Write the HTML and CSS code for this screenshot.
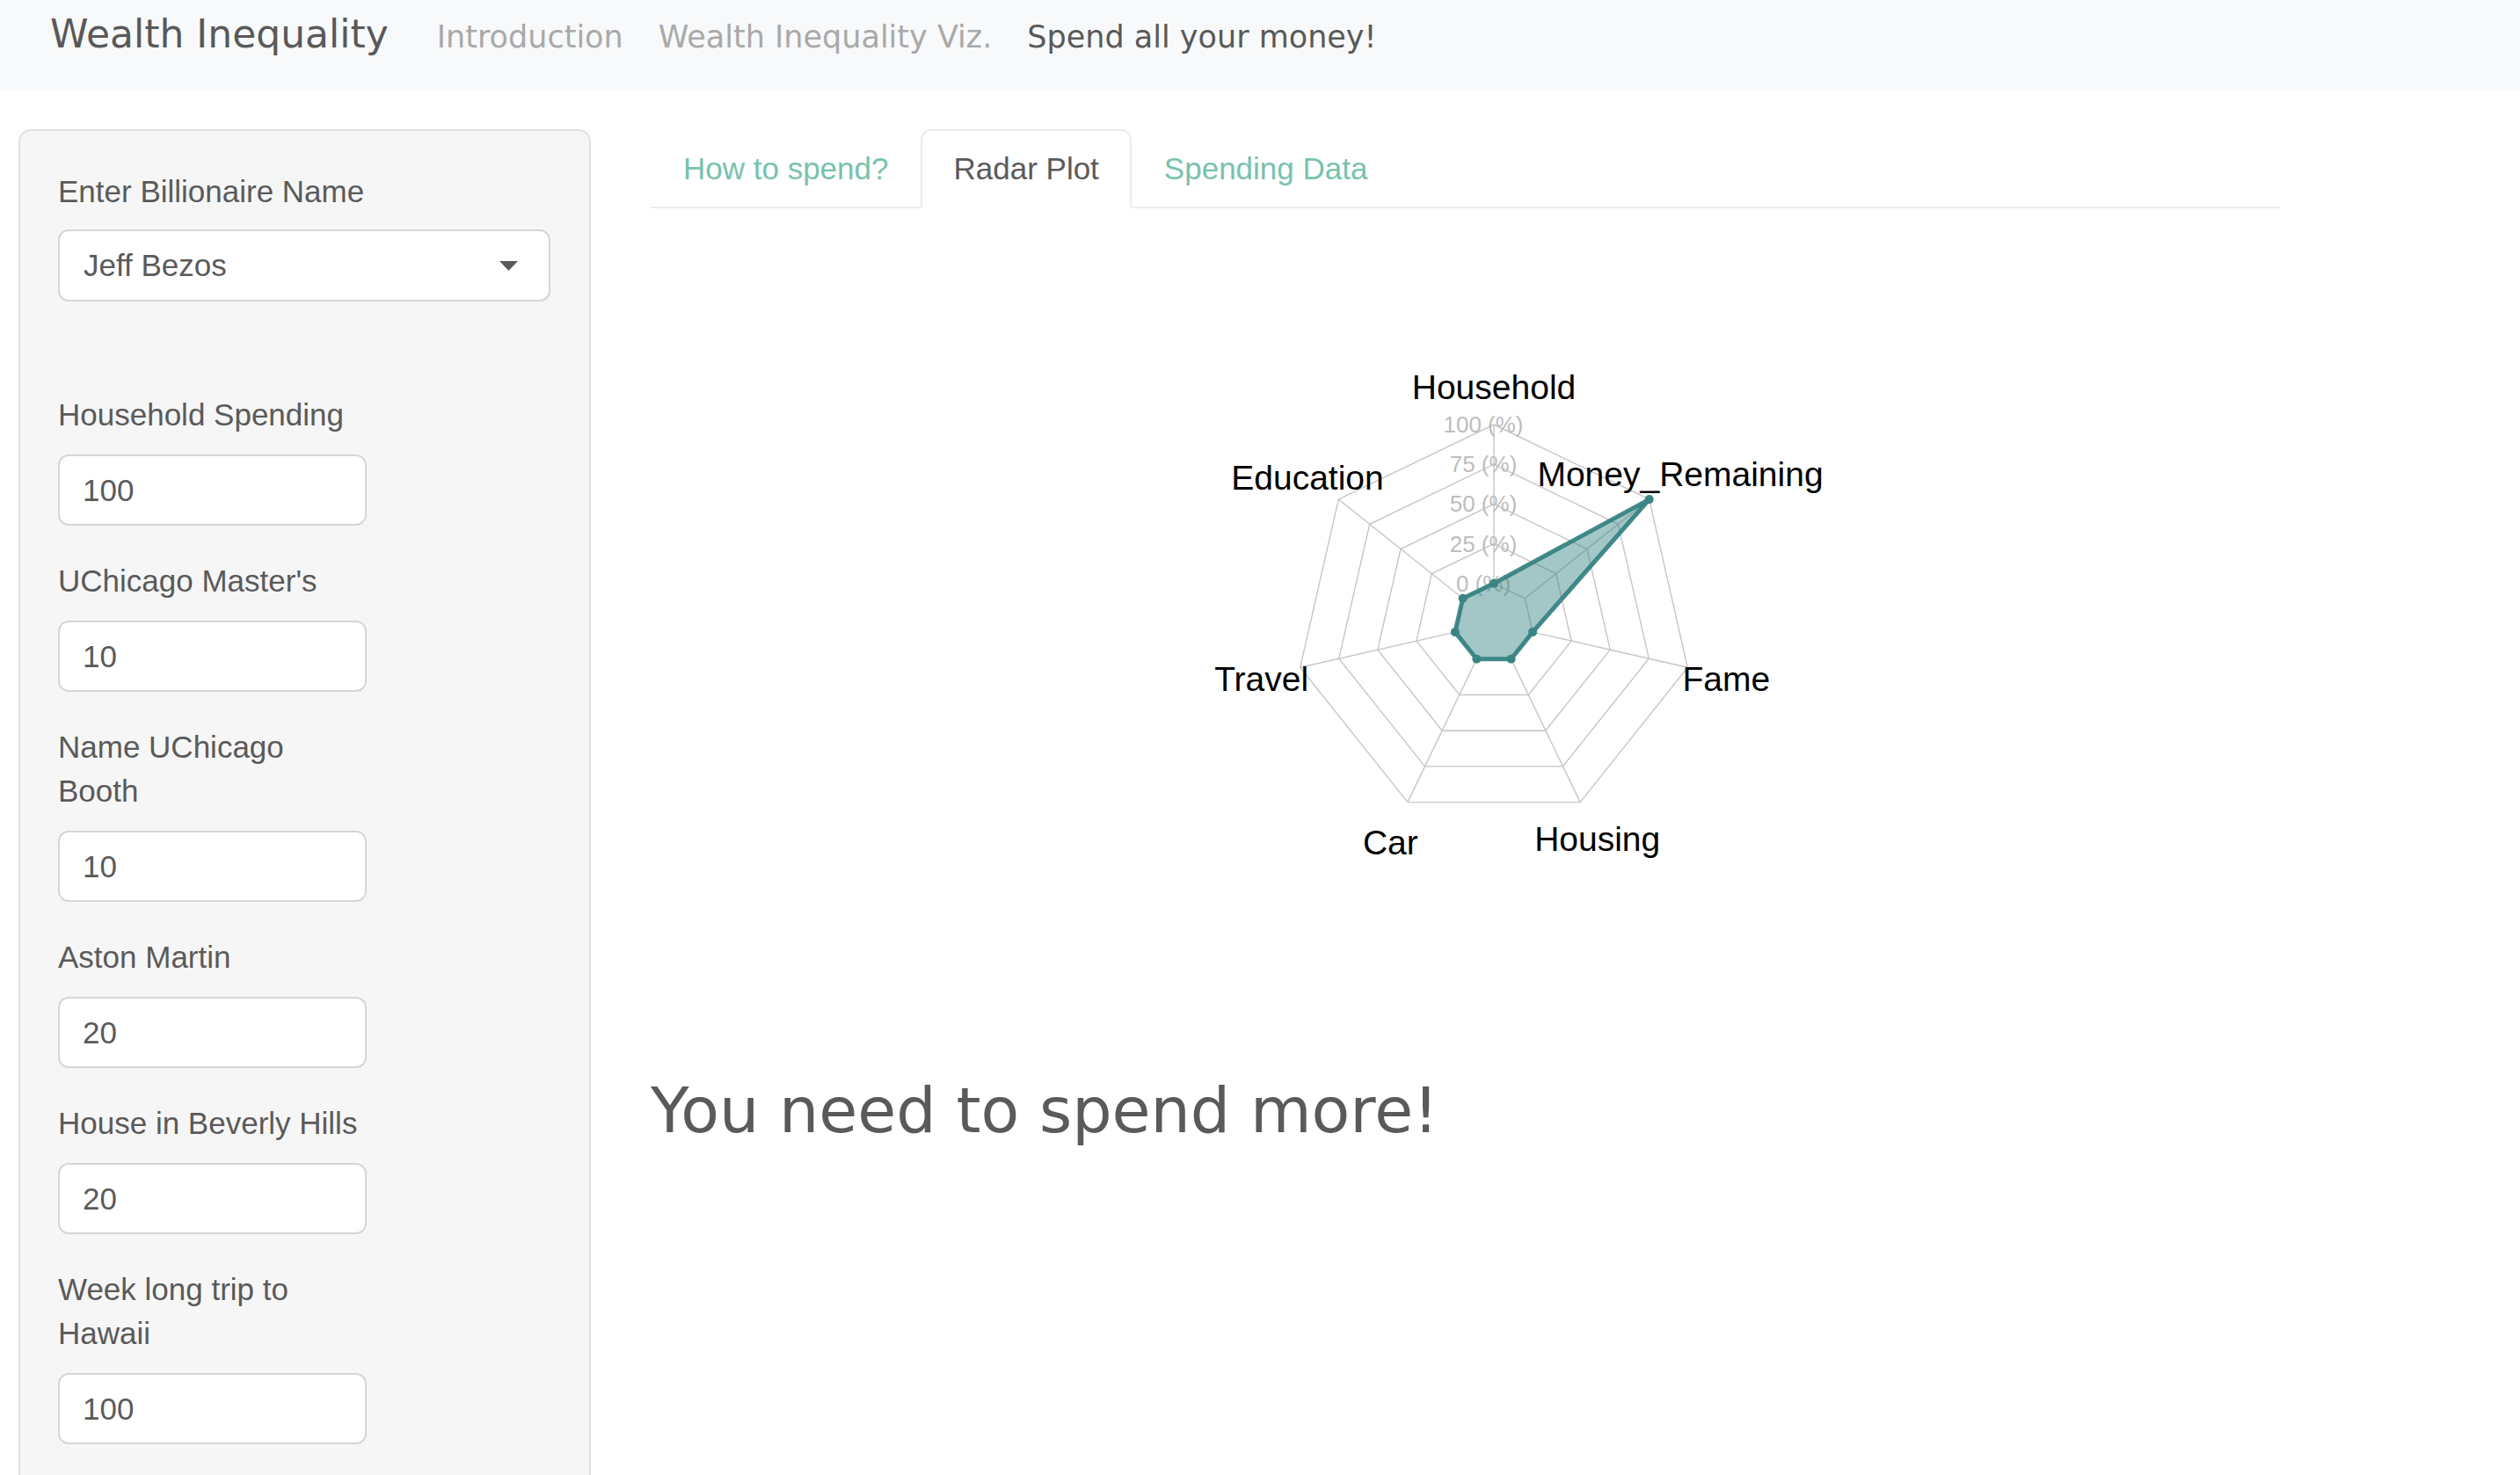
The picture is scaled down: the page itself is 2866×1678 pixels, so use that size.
FILE: index.html
```html
<!DOCTYPE html>
<html lang="en">
<head>
<meta charset="utf-8">
<title>Wealth Inequality</title>
<link rel="stylesheet" href="styles.css">
</head>
<body>
<nav class="navbar">
  <span class="brand">Wealth Inequality</span>
  <ul class="nav">
    <li><a class="nav-link">Introduction</a></li>
    <li><a class="nav-link">Wealth Inequality Viz.</a></li>
    <li><a class="nav-link active">Spend all your money!</a></li>
  </ul>
</nav>
<div class="page">
  <aside class="well">
    <div class="group select-group">
      <label>Enter Billionaire Name</label>
      <div class="select"><span>Jeff Bezos</span><svg class="caret" width="21" height="11" viewBox="0 0 21 11"><polygon points="0,0 21,0 10.5,11" fill="#5a5a5a"/></svg></div>
    </div>
    <div class="group"><label>Household Spending</label><div class="input">100</div></div>
    <div class="group"><label>UChicago Master's</label><div class="input">10</div></div>
    <div class="group"><label>Name UChicago Booth</label><div class="input">10</div></div>
    <div class="group"><label>Aston Martin</label><div class="input">20</div></div>
    <div class="group"><label>House in Beverly Hills</label><div class="input">20</div></div>
    <div class="group"><label>Week long trip to Hawaii</label><div class="input">100</div></div>
  </aside>
  <main class="main">
    <ul class="tabs">
      <li><a class="tab">How to spend?</a></li>
      <li><a class="tab active">Radar Plot</a></li>
      <li><a class="tab">Spending Data</a></li>
    </ul>
    <svg class="radar" width="1854" height="940" viewBox="0 0 1854 940">
      <g transform="translate(959 472)">
        <g class="grid">
          <polygon points="0,-226 176.7,-140.9 220.3,50.3 98.1,203.6 -98.1,203.6 -220.3,50.3 -176.7,-140.9"/>
          <polygon points="0,-180.8 141.3,-112.7 176.3,40.2 78.4,162.9 -78.4,162.9 -176.3,40.2 -141.3,-112.7"/>
          <polygon points="0,-135.6 106,-84.5 132.2,30.2 58.8,122.2 -58.8,122.2 -132.2,30.2 -106,-84.5"/>
          <polygon points="0,-90.4 70.7,-56.4 88.1,20.1 39.2,81.5 -39.2,81.5 -88.1,20.1 -70.7,-56.4"/>
          <polygon points="0,-45.2 35.3,-28.2 44.1,10.1 19.6,40.7 -19.6,40.7 -44.1,10.1 -35.3,-28.2"/>
          <line x1="0" y1="-45.2" x2="0" y2="-226"/>
          <line x1="35.3" y1="-28.2" x2="176.7" y2="-140.9"/>
          <line x1="44.1" y1="10.1" x2="220.3" y2="50.3"/>
          <line x1="19.6" y1="40.7" x2="98.1" y2="203.6"/>
          <line x1="-19.6" y1="40.7" x2="-98.1" y2="203.6"/>
          <line x1="-44.1" y1="10.1" x2="-220.3" y2="50.3"/>
          <line x1="-35.3" y1="-28.2" x2="-176.7" y2="-140.9"/>
        </g>
        <g class="levels">
          <text x="-12" y="-226">100 (%)</text>
          <text x="-12" y="-180.8">75 (%)</text>
          <text x="-12" y="-135.6">50 (%)</text>
          <text x="-12" y="-90.4">25 (%)</text>
          <text x="-12" y="-45.2">0 (%)</text>
        </g>
        <polygon class="data" points="0,-45.2 176.7,-140.9 44.1,10.1 19.6,40.7 -19.6,40.7 -44.1,10.1 -35.3,-28.2"/>
        <g class="pts">
          <circle cx="0" cy="-45.2" r="5"/>
          <circle cx="176.7" cy="-140.9" r="5"/>
          <circle cx="44.1" cy="10.1" r="5"/>
          <circle cx="19.6" cy="40.7" r="5"/>
          <circle cx="-19.6" cy="40.7" r="5"/>
          <circle cx="-44.1" cy="10.1" r="5"/>
          <circle cx="-35.3" cy="-28.2" r="5"/>
        </g>
        <g class="axis-labels">
          <text x="0" y="-269">Household</text>
          <text x="212" y="-170">Money_Remaining</text>
          <text x="264.4" y="63">Fame</text>
          <text x="117.7" y="245">Housing</text>
          <text x="-117.7" y="249">Car</text>
          <text x="-264.4" y="63">Travel</text>
          <text x="-212" y="-166">Education</text>
        </g>
      </g>
    </svg>
    <h2 class="verdict">You need to spend more!</h2>
  </main>
</div>
</body>
</html>
```

FILE: styles.css
```css
html, body {
  margin: 0;
  padding: 0;
  background: #ffffff;
}

body {
  font-family: "Liberation Sans", Arial, sans-serif;
  color: #5a5a5a;
}

.navbar {
  display: flex;
  align-items: baseline;
  height: 102px;
  box-sizing: border-box;
  padding: 9px 0 0 57px;
  background: #f8f9fa;
}

.brand {
  font-family: "DejaVu Sans", sans-serif;
  font-size: 44px;
  line-height: 60px;
  color: #595959;
  margin-right: 35px;
}

.nav {
  display: flex;
  list-style: none;
  margin: 0;
  padding: 0;
}

.nav-link {
  display: block;
  font-family: "DejaVu Sans", sans-serif;
  font-size: 35px;
  line-height: 60px;
  padding: 0 20px;
  color: #a9a9a9;
  text-decoration: none;
}

.nav-link.active {
  color: #595959;
}

.page {
  display: flex;
  align-items: flex-start;
  gap: 68px;
  padding: 45px 0 0 21px;
}

.well {
  flex: none;
  width: 651px;
  box-sizing: border-box;
  border: 2px solid #e2e2e2;
  border-radius: 14px;
  background: #f6f6f6;
  padding: 44px 44px 44px 43px;
}

.group {
  margin-bottom: 38px;
}

.group label {
  display: block;
  max-width: 350px;
  font-size: 35px;
  line-height: 50px;
  margin-bottom: 20px;
  color: #5a5a5a;
}

.select-group {
  margin-bottom: 104px;
}

.select-group label {
  margin-bottom: 18px;
}

.select {
  height: 82px;
  box-sizing: border-box;
  border: 2px solid #d2d7dc;
  border-radius: 12px;
  background: #ffffff;
  display: flex;
  align-items: center;
  justify-content: space-between;
  padding: 0 35px 0 27px;
  font-size: 35px;
  color: #5a5a5a;
}

.caret {
  display: block;
}

.input {
  width: 351px;
  height: 81px;
  box-sizing: border-box;
  border: 2px solid #d2d7dc;
  border-radius: 12px;
  background: #ffffff;
  display: flex;
  align-items: center;
  padding-left: 26px;
  font-size: 35px;
  color: #5a5a5a;
}

.main {
  flex: none;
  width: 1854px;
}

.tabs {
  display: flex;
  list-style: none;
  margin: 0;
  padding: 0;
  border-bottom: 2px solid #ececec;
}

.tabs li {
  margin-bottom: -2px;
}

.tab {
  display: block;
  padding: 18px 35px;
  line-height: 50px;
  border: 2px solid transparent;
  border-radius: 12px 12px 0 0;
  font-size: 35px;
  color: #78c2ad;
  text-decoration: none;
}

.tab.active {
  color: #5a5a5a;
  background: #ffffff;
  border-color: #ececec #ececec #ffffff;
}

.radar {
  display: block;
}

.grid polygon,
.grid line {
  fill: none;
  stroke: #c6c6c6;
  stroke-width: 1.4;
}

.levels text {
  font-family: "Liberation Sans", Arial, sans-serif;
  font-size: 26px;
  fill: #bdbdbd;
  text-anchor: middle;
  dominant-baseline: central;
}

.data {
  fill: rgba(51, 128, 128, 0.45);
  stroke: rgba(51, 128, 128, 0.92);
  stroke-width: 5;
  stroke-linejoin: round;
}

.pts circle {
  fill: #3a8483;
}

.axis-labels text {
  font-family: "Liberation Sans", Arial, sans-serif;
  font-size: 39px;
  fill: #000000;
  text-anchor: middle;
  dominant-baseline: central;
}

.verdict {
  font-family: "DejaVu Sans", sans-serif;
  font-size: 71.5px;
  font-weight: normal;
  line-height: 84px;
  margin: 45px 0 0;
  color: #5a5a5a;
}
```
